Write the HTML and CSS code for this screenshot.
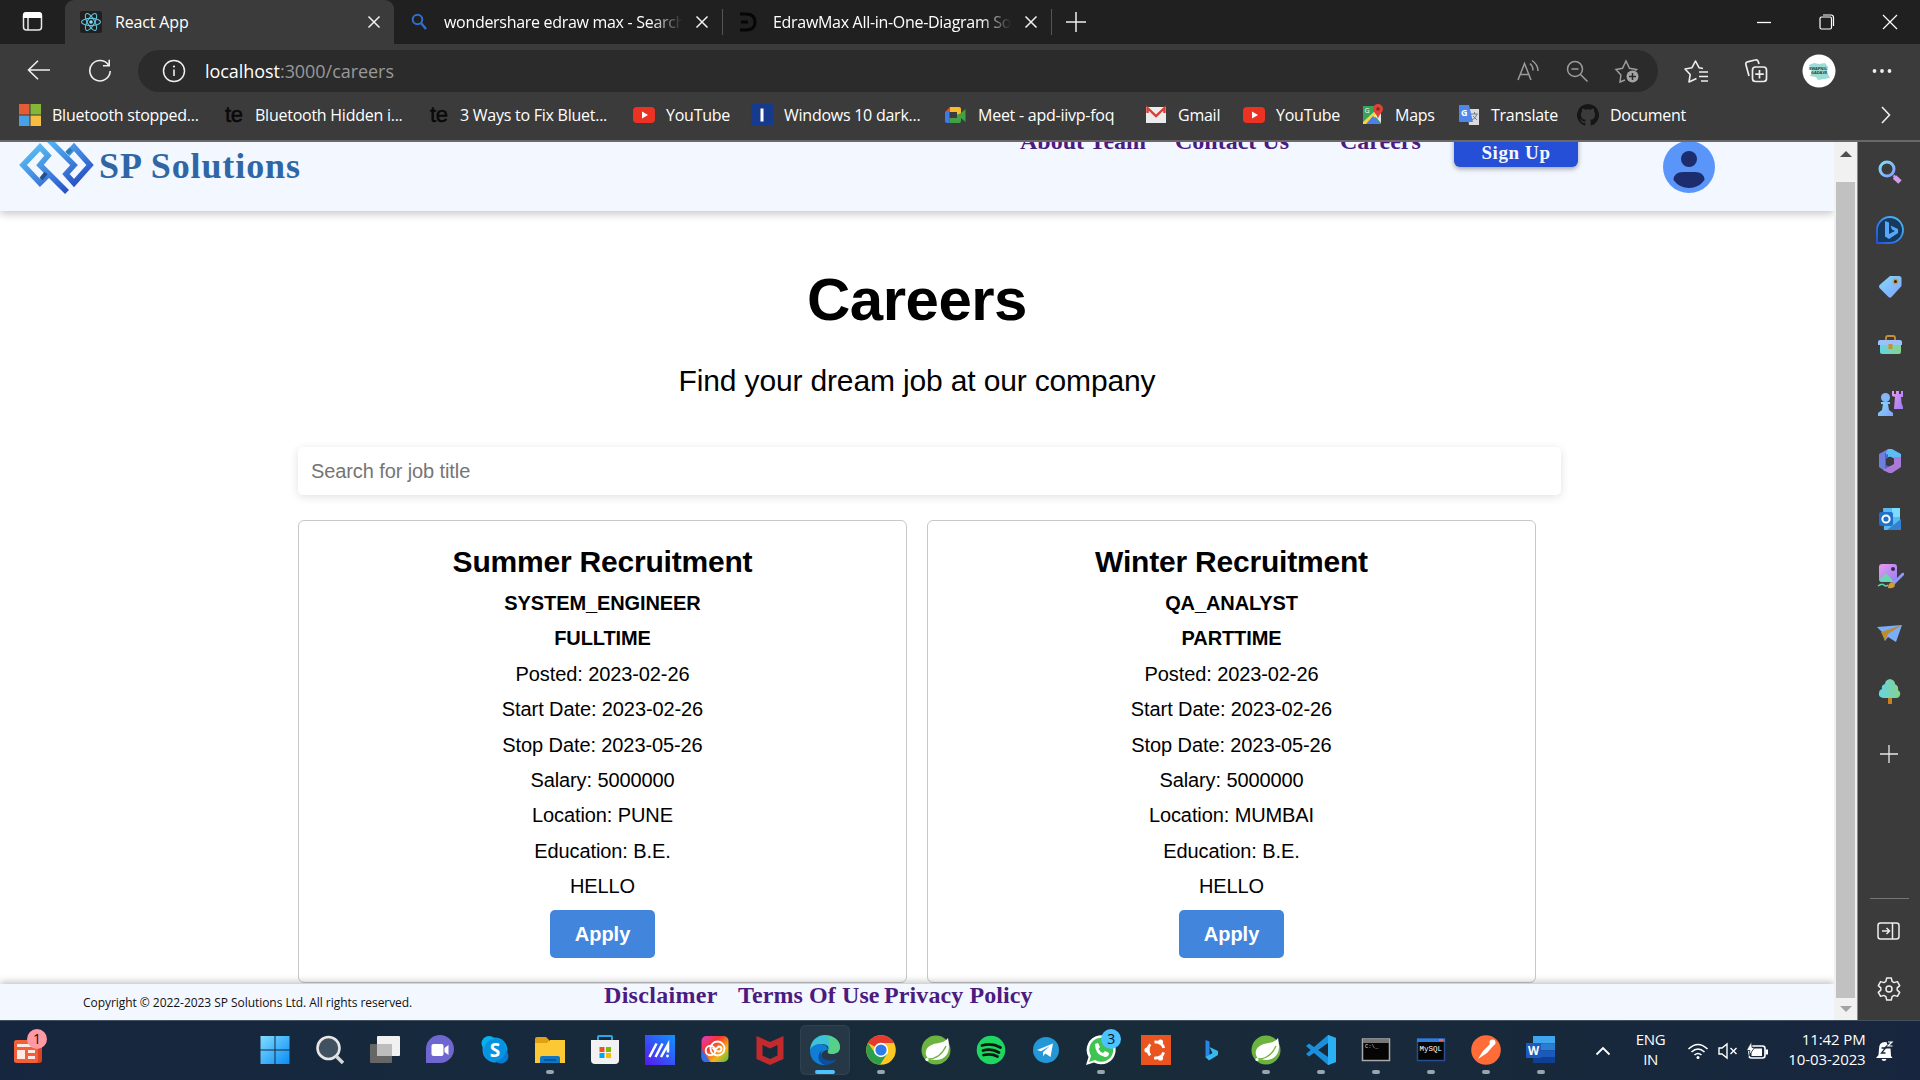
FILE: index.html
```html
<!DOCTYPE html>
<html lang="en">
<head>
<meta charset="utf-8">
<title>React App</title>
<link rel="stylesheet" href="styles.css">
</head>
<body>
<svg class="defs" width="0" height="0">
  <defs>
    <linearGradient id="blue" x1="0" y1="0" x2="1" y2="1"><stop offset="0" stop-color="#7fdcff"/><stop offset="1" stop-color="#0a8cf5"/></linearGradient>
    <linearGradient id="pale" x1="0" y1="0" x2="1" y2="1"><stop offset="0" stop-color="#7edcf8"/><stop offset="1" stop-color="#86a0ff"/></linearGradient>
    <linearGradient id="ring" x1="1" y1="0" x2="0" y2="1"><stop offset="0" stop-color="#4fc3f7"/><stop offset="1" stop-color="#2552e0"/></linearGradient>
    <linearGradient id="violet" x1="0" y1="0" x2="1" y2="1"><stop offset="0" stop-color="#e79af0"/><stop offset="1" stop-color="#9a7cf4"/></linearGradient>
    <linearGradient id="green" x1="0" y1="0" x2="1" y2="0"><stop offset="0" stop-color="#66d3e6"/><stop offset="1" stop-color="#86d38a"/></linearGradient>
    <linearGradient id="brand" gradientUnits="userSpaceOnUse" x1="30" y1="4" x2="62" y2="56"><stop offset="0" stop-color="#58bdf2"/><stop offset=".55" stop-color="#3f7fdc"/><stop offset="1" stop-color="#2447bd"/></linearGradient>
  </defs>
  <symbol id="close" viewBox="0 0 14 14"><path d="M1.500 1.500l11 11M12.500 1.500l-11 11" stroke="#f2f2f2" stroke-width="1.500" fill="none"/></symbol>
  <symbol id="youtube" viewBox="0 0 22 22"><rect y="3" width="22" height="16" rx="4" fill="#ec3323"/><path d="M9 7.500v7l6-3.500z" fill="#fff"/></symbol>
  <symbol id="spring" viewBox="0 0 30 30"><circle cx="15" cy="15" r="14.500" fill="#6db33f"/><path d="M27 3c1.500 8 2 15-4 19.500-5 3.500-11 2.500-15.500 1.500-5-5-3-12 4-14.500C17 7.500 23 8.500 27 3z" fill="#fff"/><path d="M7 24c7 0 14-4 18-13" stroke="#6db33f" stroke-width="1.300" fill="none"/><circle cx="6" cy="24.500" r="1.600" fill="#fff"/></symbol>
</svg>

<div class="tabs">
  <div class="tab-menu"><svg width="22" height="22" viewBox="0 0 22 22"><rect x="1.500" y="2" width="18" height="17" rx="3" fill="none" stroke="#e8e8e8" stroke-width="1.500"/><path d="M1 7V4q0-3 3-3h13q3 0 3 3v3z" fill="#fff"/><path d="M6 7v12" stroke="#e8e8e8" stroke-width="1.500"/></svg></div>
  <div class="tab tab-active">
    <svg width="22" height="22" viewBox="0 0 22 22"><rect width="22" height="22" rx="2" fill="#202020"/><g fill="none" stroke="#61c3de" stroke-width="1.100"><ellipse cx="11" cy="11" rx="9.500" ry="3.600"/><ellipse cx="11" cy="11" rx="9.500" ry="3.600" transform="rotate(60 11 11)"/><ellipse cx="11" cy="11" rx="9.500" ry="3.600" transform="rotate(120 11 11)"/></g><circle cx="11" cy="11" r="1.700" fill="#8be6ff"/></svg>
    <span class="tab-title">React App</span><svg class="tab-close"><use href="#close"/></svg>
  </div>
  <div class="tab tab-search">
    <svg width="20" height="20" viewBox="0 0 20 20"><circle cx="7.500" cy="7.500" r="4.800" fill="none" stroke="#2f6fd0" stroke-width="2"/><path d="M11 11l5 6" stroke="#2f6fd0" stroke-width="2.400"/></svg>
    <span class="tab-title fade">wondershare edraw max - Search</span><svg class="tab-close"><use href="#close"/></svg>
  </div>
  <div class="tab tab-edraw">
    <svg width="20" height="22" viewBox="0 0 20 22"><path d="M1 3h6c6 0 9 3 9 8s-3 8-9 8H1M2 11h7" fill="none" stroke="#060606" stroke-width="3"/></svg>
    <span class="tab-title fade">EdrawMax All-in-One-Diagram So</span><svg class="tab-close"><use href="#close"/></svg>
  </div>
  <svg class="tab-new" width="20" height="20" viewBox="0 0 20 20"><path d="M10 0v20M0 10h20" stroke="#eee" stroke-width="1.500"/></svg>
  <div class="window-buttons">
    <svg width="16" height="16" viewBox="0 0 16 16"><path d="M1 8.500h14" stroke="#fff" stroke-width="1.300"/></svg>
    <svg width="16" height="16" viewBox="0 0 16 16" fill="none" stroke="#fff" stroke-width="1.200"><rect x="1" y="3" width="11.500" height="12" rx="1.500"/><path d="M4 1h8q2.500 0 2.500 2.500V12"/></svg>
    <svg width="16" height="16" viewBox="0 0 16 16"><path d="M1 1l14 14M15 1L1 15" stroke="#fff" stroke-width="1.200"/></svg>
  </div>
</div>

<div class="toolbar">
  <svg class="back" width="24" height="20" viewBox="0 0 24 20" fill="none" stroke="#eee" stroke-width="1.600"><path d="M23 10H1.500M11 .8L1.500 10l9.500 9.200"/></svg>
  <svg class="reload" width="24" height="24" viewBox="0 0 24 24" fill="none" stroke="#eee" stroke-width="1.600"><path d="M20.800 6.500A10.200 10.200 0 1 0 22.200 12M15 6.800h6.200V.8"/></svg>
  <div class="omnibox">
    <svg width="24" height="24" viewBox="0 0 24 24"><circle cx="12" cy="12" r="10.500" fill="none" stroke="#eee" stroke-width="1.500"/><path d="M12 10.500v6.500" stroke="#eee" stroke-width="1.600"/><circle cx="12" cy="7.500" r="1.100" fill="#eee"/></svg>
    <span class="url">localhost<span class="url-rest">:3000/careers</span></span>
    <div class="omnibox-actions">
      <svg width="24" height="24" viewBox="0 0 24 24" fill="none" stroke="#9c9c9c" stroke-width="1.500"><path d="M2 21L8.500 4.500 15 21M4.500 15.500h8M14 4.500q3 2.500 3 7M16 1.500q6 4 6 10.500"/></svg>
      <svg width="24" height="24" viewBox="0 0 24 24" fill="none" stroke="#9c9c9c" stroke-width="1.500"><circle cx="10" cy="10" r="7.500"/><path d="M6.500 10h7M15.500 15.500l7 7"/></svg>
      <svg width="26" height="26" viewBox="0 0 26 26" fill="none" stroke="#9c9c9c" stroke-width="1.500"><path d="M11 22l-5 2 .9-7L2 11.500l6.500-1.200L12 3l3.500 7.300 7 1.200-1.500 1.500"/><circle cx="18.500" cy="18.500" r="6" fill="#a5a5a5" stroke="none"/><path d="M18.500 15v7M15 18.500h7" stroke="#2b2b2b"/></svg>
    </div>
  </div>
  <svg width="26" height="26" viewBox="0 0 26 26" fill="none" stroke="#eee" stroke-width="1.600" stroke-linejoin="round"><path d="M13.500 20.500L6 24l1.200-7.500L2 11l7-1.300L12.500 3l3.500 6.700 4 .8M16 14h9M16 18.500h9M18 23h7"/></svg>
  <svg width="26" height="26" viewBox="0 0 26 26" fill="none" stroke="#eee" stroke-width="1.700"><rect x="9.500" y="9" width="14" height="14.500" rx="3"/><path d="M16.500 12v8.500M12.300 16.200h8.500M6 18L3 7q-.8-2.500 1.500-3.200L12 2q2.500-.7 3.200 1.500L16 6"/></svg>
  <svg width="34" height="34" viewBox="0 0 34 34"><circle cx="17" cy="17" r="16.500" fill="#fff"/><path d="M7 11l5-2 5 1 6-1 3 4-1 5 3 6-6 1-6 1-2-3-6-1 2-4z" fill="#9bdcd5"/><text x="7" y="15.500" font-size="4" font-weight="700" fill="#1d3b3b">SWAPNIL</text><text x="9" y="20" font-size="4" font-weight="700" fill="#1d3b3b">GADAVE</text></svg>
  <svg width="20" height="6" viewBox="0 0 20 6" fill="#eee"><circle cx="2.500" cy="3" r="1.900"/><circle cx="10" cy="3" r="1.900"/><circle cx="17.500" cy="3" r="1.900"/></svg>
</div>

<div class="bookmarks">
  <div class="bookmark"><svg viewBox="0 0 22 22"><path fill="#e45c35" d="M0 0h10.500v10.500H0z"/><path fill="#86b637" d="M11.500 0H22v10.500H11.500z"/><path fill="#4aa0e8" d="M0 11.500h10.500V22H0z"/><path fill="#f5bd42" d="M11.500 11.500H22V22H11.500z"/></svg><span>Bluetooth stopped...</span></div>
  <div class="bookmark"><b class="te">te</b><span>Bluetooth Hidden i...</span></div>
  <div class="bookmark"><b class="te">te</b><span>3 Ways to Fix Bluet...</span></div>
  <div class="bookmark"><svg><use href="#youtube"/></svg><span>YouTube</span></div>
  <div class="bookmark"><svg viewBox="0 0 22 22"><path fill="#163a8c" d="M0 0h22v22H0z"/><path fill="#fff" d="M9.500 4.500h3v13h-3z"/></svg><span>Windows 10 dark...</span></div>
  <div class="bookmark"><svg viewBox="0 0 22 22"><path fill="#3f7ae8" d="M0 8h4.500v11H2q-2 0-2-2z"/><path fill="#e5463a" d="M0 8l5-5v5z"/><path fill="#f8bb2c" d="M5 3h9q2 0 2 2v5l-4 1V8H5z"/><path fill="#43a047" d="M4.500 14H12v-3l4-2 4.500-4v13L16 14v3q0 2-2 2H4.500z"/></svg><span>Meet - apd-iivp-foq</span></div>
  <div class="bookmark"><svg viewBox="0 0 22 22"><path fill="#ececec" d="M1 3h20v16H1z"/><path fill="none" stroke="#d93f35" stroke-width="2.400" d="M2.500 9V4l8.500 8 8.500-8v5"/></svg><span>Gmail</span></div>
  <div class="bookmark"><svg><use href="#youtube"/></svg><span>YouTube</span></div>
  <div class="bookmark"><svg viewBox="0 0 22 22"><path fill="#37a259" d="M1 2h18v18H1z"/><path fill="#f4d24b" d="M1 18L15 5l4 3L6 20H1z"/><path fill="#e8e8e8" d="M12 11l7 8V9z"/><path fill="#4a80ec" d="M4 20l7-8 8 8z"/><path fill="#dc4437" d="M16 0a5 5 0 0 1 5 5c0 3-4 5-5 10-1-5-5-7-5-10a5 5 0 0 1 5-5z"/><circle cx="16" cy="5" r="1.800" fill="#8f2420"/><text x="2.500" y="9" font-size="7" fill="#fff">G</text></svg><span>Maps</span></div>
  <div class="bookmark"><svg viewBox="0 0 22 22"><path fill="#dcdcdc" d="M9 5h12v16H11z"/><path fill="#4f86ec" d="M1 1h10l4 17H2q-1 0-1-1z"/><path d="M13 10h7M16.500 8v2M14 16q4-2 5-6M15 12l4 4" stroke="#6f7f90" fill="none"/><text x="3" y="12" font-size="9" font-weight="700" fill="#fff">G</text></svg><span>Translate</span></div>
  <div class="bookmark"><svg viewBox="0 0 16 16"><path fill="#161616" d="M8 0a8 8 0 0 0-2.530 15.590c.4.070.55-.17.55-.380 0-.19-.010-.820-.010-1.490-2.010.370-2.530-.490-2.690-.940-.090-.230-.480-.940-.820-1.130-.280-.150-.680-.520-.010-.530.630-.010 1.080.580 1.230.820.720 1.210 1.870.870 2.330.660.070-.520.280-.870.510-1.070-1.780-.2-3.640-.890-3.640-3.950 0-.870.310-1.590.820-2.150-.080-.2-.360-1.020.080-2.120 0 0 .670-.210 2.200.820a7.600 7.600 0 0 1 4 0c1.530-1.040 2.200-.820 2.200-.820.440 1.100.160 1.920.080 2.120.510.560.820 1.270.820 2.150 0 3.070-1.870 3.750-3.650 3.950.290.250.540.730.540 1.480 0 1.070-.010 1.930-.010 2.200 0 .210.150.460.550.380A8 8 0 0 0 8 0z"/></svg><span>Document</span></div>
  <svg class="more" width="12" height="18" viewBox="0 0 12 18"><path d="M2 1l7.500 8L2 17" stroke="#eee" stroke-width="1.600" fill="none"/></svg>
</div>

<div class="workspace">
  <div class="page">
    <header class="site-header">
      <svg class="logo" width="100" height="60" viewBox="0 4 100 60" fill="none" stroke="url(#brand)" stroke-width="5.600">
        <path d="M37 38L30 45 13 27 30 9l8 8.500L30 27 57 54"/>
        <path d="M39 2L64 27l-8 9 8 9 16-18L64 9l-6.500 7"/>
        <path d="M31 41l5-6" stroke="#24508f" stroke-width="4"/>
        <path d="M57 15l4-4" stroke="#2f7dab" stroke-width="4"/>
      </svg>
      <span class="brand">SP Solutions</span>
      <nav class="site-nav"><a class="nav-about">About Team</a><a class="nav-contact">Contact Us</a><a class="nav-careers">Careers</a></nav>
      <button class="sign-up">Sign Up</button>
      <svg class="account" width="52" height="52" viewBox="0 0 52 52"><circle cx="26" cy="26" r="26" fill="#5a96f9"/><circle cx="26" cy="18" r="8" fill="#1c2c6c"/><path d="M20 31h12q9 0 9.500 8-6 8-15.500 8t-15.500-8q.5-8 9.500-8z" fill="#1c2c6c"/></svg>
    </header>
    <main class="careers">
      <h1>Careers</h1>
      <p class="tagline">Find your dream job at our company</p>
      <div class="search">Search for job title</div>
      <div class="jobs">
        <article class="job">
          <h2>Summer Recruitment</h2>
          <p><b>SYSTEM_ENGINEER</b></p><p><b>FULLTIME</b></p>
          <p>Posted: 2023-02-26</p><p>Start Date: 2023-02-26</p><p>Stop Date: 2023-05-26</p>
          <p>Salary: 5000000</p><p>Location: PUNE</p><p>Education: B.E.</p><p>HELLO</p>
          <button class="apply">Apply</button>
        </article>
        <article class="job">
          <h2>Winter Recruitment</h2>
          <p><b>QA_ANALYST</b></p><p><b>PARTTIME</b></p>
          <p>Posted: 2023-02-26</p><p>Start Date: 2023-02-26</p><p>Stop Date: 2023-05-26</p>
          <p>Salary: 5000000</p><p>Location: MUMBAI</p><p>Education: B.E.</p><p>HELLO</p>
          <button class="apply">Apply</button>
        </article>
      </div>
    </main>
    <footer class="site-footer">
      <span class="copyright">Copyright © 2022-2023 SP Solutions Ltd. All rights reserved.</span>
      <a class="link-disclaimer">Disclaimer</a><a class="link-terms">Terms Of Use</a><a class="link-privacy">Privacy Policy</a>
    </footer>
  </div>
  <div class="scrollbar"><i class="arrow-up"></i><div class="thumb"></div><i class="arrow-down"></i></div>
  <aside class="sidebar">
    <div class="side-item"><svg viewBox="0 0 28 28"><circle cx="11" cy="11" r="7" fill="none" stroke="url(#pale)" stroke-width="3"/><path d="M17.500 17.500l2 2" stroke="#9aa0f0" stroke-width="2.500"/><path d="M18.500 19l5.500 5" stroke="#d79af0" stroke-width="5"/></svg></div>
    <div class="side-item"><svg viewBox="0 0 28 28"><path d="M1 27V14A13 13 0 1 1 14 27z" fill="#163a5e" stroke="url(#ring)" stroke-width="1.800"/><path d="M9 5l4 1.500V18l6-3-3-1.500-1.500-4L22 13v4l-9 6-4-2.500z" fill="#55a8fb"/></svg></div>
    <div class="side-item"><svg viewBox="0 0 28 28"><path d="M14 3h9q2.500 0 2.500 2.500V13L15.500 24q-1.500 1.500-3 0L3.500 15q-1-1.500 0-3z" fill="url(#pale)"/><circle cx="19.500" cy="8.500" r="2.200" fill="#222" stroke="#d79a2c" stroke-width="1.400"/></svg></div>
    <div class="side-item"><svg viewBox="0 -1 28 28"><path d="M10 9V6q0-2 2-2h5q2 0 2 2v3" fill="none" stroke="#c89031" stroke-width="1.800"/><path d="M4 13h21v7q0 2-2 2H6q-2 0-2-2z" fill="url(#green)"/><path d="M2 10q0-2 2-2h20q2 0 2 2v3H2z" fill="#9cc0fb"/><path d="M12.500 12h4v5h-4z" fill="#c89031"/></svg></div>
    <div class="side-item"><svg viewBox="0 0 28 28"><path d="M16 2h2v3h2V2h3v3h2V2h2v6h-2l.5 6 1.500 4v2h-9l1-12-3-1z" fill="url(#violet)"/><circle cx="9.500" cy="8.500" r="4.500" fill="#84b6fc"/><path d="M5 13h9v2h-2l1 6 4 3v3H2v-3l4-3 1-6H5z" fill="url(#pale)"/></svg></div>
    <div class="side-item"><svg viewBox="0 0 28 28"><path d="M12 2h4l9 5v9l-6-4-4-2h-5V4z" fill="#5cbdf5"/><path d="M12 2L3 7v13l6 4V8z" fill="#6f7fe0"/><path d="M9 8l3-1v4l-2 3v4l4 2-5 3z" fill="#4a63cf"/><path d="M25 10v10l-9 6h-3l-6-3 7-4 4-2V10z" fill="#a97ad8"/><path d="M14 9.500l4 2.500v4.500l-4 2.500-4-2.500V12z" fill="#3b3b3b"/></svg></div>
    <div class="side-item"><svg viewBox="0 0 28 28"><path d="M7 3h17v22H8z" fill="#58b9f3"/><path d="M16 3h8v9h-8z" fill="#7cdcff"/><path d="M11 25l14-11v11z" fill="#3282cf"/><rect x="3" y="7" width="14" height="14" rx="2" fill="#2071c8"/><circle cx="10" cy="14" r="3.600" fill="none" stroke="#fff" stroke-width="2"/></svg></div>
    <div class="side-item"><svg viewBox="0 0 28 28"><rect x="3" y="2" width="18" height="18" rx="3" fill="url(#violet)"/><path d="M3 18l7-7 8 9H5z" fill="#6cd6b4"/><circle cx="17" cy="7" r="2" fill="#313047"/><path d="M16 21L26 11q3-1 2 2L18 23z" fill="#8b9afb"/><path d="M12 26q0-5 4-6l3 3q-1 4-7 3z" fill="#d79a2c"/><path d="M2 24q4-3 6-1t4 0" fill="none" stroke="#66d3b0" stroke-width="1.500"/></svg></div>
    <div class="side-item"><svg viewBox="0 0 28 28"><path d="M1 7l25-2-6 17-8-5-3 4-2-8z" fill="#79aef8"/><path d="M5 12L26 5 12 14 9 21z" fill="#c08a2f"/></svg></div>
    <div class="side-item"><svg viewBox="0 0 28 28"><path d="M12 18h4v8h-4z" fill="#c87f20"/><path d="M14 1q5 1 5 5 4 2 3 6 4 3 1 7-1 1-3 1H7q-5-1-4-5 0-3 3-4-1-4 3-5 0-4 5-5z" fill="url(#green)"/></svg></div>
    <div class="side-add"><svg width="18" height="18" viewBox="0 0 18 18"><path d="M9 0v18M0 9h18" stroke="#e8e8e8" stroke-width="1.300"/></svg></div>
    <div class="side-bottom">
      <svg width="24" height="18" viewBox="0 0 24 18" fill="none" stroke="#eee" stroke-width="1.500"><rect x="1" y="1" width="21" height="16" rx="2.500"/><path d="M15.500 1v16M5 9h7M9.500 6l3 3-3 3"/></svg>
      <svg width="24" height="24" viewBox="0 0 24 24" fill="none" stroke="#eee" stroke-width="1.500"><circle cx="12" cy="12" r="3"/><path d="M9.700 1h4.600l.8 3.400 2 1.200 3.300-1 2.300 4-2.500 2.300v2.200l2.500 2.300-2.300 4-3.300-1-2 1.200-.8 3.400H9.700l-.8-3.400-2-1.200-3.300 1-2.300-4 2.500-2.300v-2.200L1.300 8.600l2.300-4 3.300 1 2-1.200z" stroke-linejoin="round"/></svg>
    </div>
  </aside>
</div>

<div class="taskbar">
  <div class="news"><svg width="30" height="24" viewBox="0 0 30 24"><rect y="0" width="28" height="23" rx="3" fill="#d9431f"/><rect width="24" height="23" rx="3" fill="#f2603a"/><path d="M3 4h18v3H3zM3 10h8v9H3zM14 10h7v3h-7zM14 16h7v3h-7z" fill="#fde9e2"/></svg><span class="badge badge-news">1</span></div>
  <div class="apps">
    <div class="app"><svg viewBox="0 0 30 30"><path fill="url(#blue)" d="M.5 1h14v13.500H.5zM15.500 1h14v13.500h-14zM.5 15.500h14V29H.5zM15.500 15.500h14V29h-14z"/></svg></div>
    <div class="app"><svg viewBox="0 0 30 30"><circle cx="13.500" cy="13" r="11" fill="#405160" stroke="#e6e6e6" stroke-width="2.600"/><path d="M21 21l7 7" stroke="#d8d8d8" stroke-width="3.600"/></svg></div>
    <div class="app"><svg viewBox="0 0 30 30"><rect y="9" width="22" height="19" rx="1" fill="#666"/><rect x="7" y="1" width="23" height="20" rx="1" fill="#f1f1f1"/><path d="M7 9h15v12H7z" fill="#bdbdbd"/></svg></div>
    <div class="app"><svg viewBox="0 0 30 30"><path d="M1 28V15A14 14 0 1 1 15 28z" fill="#6f67cf"/><rect x="6.500" y="9" width="12" height="12" rx="2" fill="#fff"/><path d="M19.500 13l4-3v10l-4-3z" fill="#fff"/></svg></div>
    <div class="app"><svg viewBox="0 0 30 30"><circle cx="15" cy="15" r="12.500" fill="#0b9be4"/><circle cx="9" cy="8.500" r="7.500" fill="#0ab0ee"/><circle cx="21" cy="21" r="7.500" fill="#0878d0"/><circle cx="15" cy="15" r="11" fill="#0793df"/><text x="15" y="21.500" text-anchor="middle" font-size="19" font-weight="700" fill="#fff">S</text></svg></div>
    <div class="app run"><svg viewBox="0 0 30 30"><path d="M0 4q0-2 2-2h9l3 3v5H0z" fill="#dfa013"/><path d="M0 8h12l3-3h15v23H0z" fill="#fcc935"/><path d="M5 28v-5q0-2 2-2h16q2 0 2 2v5z" fill="#0f76c6"/><path d="M9 25h12" stroke="#0a4c8c" stroke-width="1.500"/></svg></div>
    <div class="app"><svg viewBox="0 0 30 30"><path d="M8 6V2q0-1 1-1h12q1 0 1 1v4" fill="none" stroke="#2aa7e8" stroke-width="2"/><path d="M1 5h28v20q0 4-4 4H5q-4 0-4-4z" fill="#f2f2f2"/><path fill="#f25022" d="M9.500 12h5v5h-5z"/><path fill="#7fba00" d="M16 12h5v5h-5z"/><path fill="#00a4ef" d="M9.500 18h5v5h-5z"/><path fill="#ffb900" d="M16 18h5v5h-5z"/></svg></div>
    <div class="app"><svg viewBox="0 0 30 30"><defs><linearGradient id="asus" x1="0" y1="1" x2="1" y2="0"><stop stop-color="#5a16f0"/><stop offset="1" stop-color="#0c95ff"/></linearGradient></defs><path fill="url(#asus)" d="M0 0h30v30H0z"/><path d="M4.500 22L11.500 8.500M10.500 22l7-13.500M16 22l7-12.500v8" stroke="#fff" stroke-width="2.500" fill="none"/><circle cx="22.500" cy="21" r="1.400" fill="#fff"/></svg></div>
    <div class="app"><svg viewBox="0 0 30 30"><defs><linearGradient id="cc" x1="0" y1="0" x2="1" y2="1"><stop stop-color="#e23bd6"/><stop offset=".35" stop-color="#f2352c"/><stop offset=".7" stop-color="#f6b318"/><stop offset="1" stop-color="#3fc34b"/></linearGradient></defs><rect x="1.500" y="1" width="27" height="26" rx="5" fill="url(#cc)"/><path d="M1.500 14l9 13H6q-4.500 0-4.500-5z" fill="#386de8"/><g fill="none" stroke="#fff" stroke-width="1.900"><circle cx="17.500" cy="13.500" r="7"/><circle cx="10.500" cy="15.500" r="4.800"/><path d="M14 16l4.500-4.500q3 0 3 2.500t-3 2.500q-3 0-6-4"/></g></svg></div>
    <div class="app"><svg viewBox="0 0 30 30"><path d="M1.500 1l13.500 6 13.500-6v23L15 30 1.500 24zM7.500 10v10.500L15 24l7.500-3.500V10L15 13.500z" fill="#c22a2e" fill-rule="evenodd"/></svg></div>
    <div class="app active"><svg viewBox="0 0 30 30"><path d="M0 16C0 6 7 0 15 0c9 0 15 6 15 12 0 5-4 7-8 7-3 0-5-1-4-3 2-5-2-7-6-7C6 9 1 12 0 16z" fill="#3cc4d6"/><path d="M18 1c8 1 12 6 12 11 0 5-4 7-8 7-3 0-5-1-4-3 3-5 1-8 0-15z" fill="#61d66e" opacity=".75"/><path d="M0 16C1 11 6 9 11 9c5 0 7 4 7 6-8 0-9 9-1 15C6 31 0 24 0 16z" fill="#117ed6"/><path d="M12 15c-3 6 3 14 15 9-3 4-7 6-12 6C8 28 6 20 12 15z" fill="#0d4e9d"/></svg></div>
    <div class="app run"><svg viewBox="0 0 30 30"><circle cx="15" cy="15" r="14.800" fill="#fdc821"/><path d="M15 15L2 8A14.800 14.800 0 0 1 28 8H15z" fill="#e33b2e"/><path d="M2 8A14.800 14.800 0 0 0 14 29.800L21 19 15 15 9 18z" fill="#2c9f4b"/><circle cx="15" cy="15" r="7.200" fill="#fff"/><circle cx="15" cy="15" r="5.600" fill="#2f7bea"/></svg></div>
    <div class="app"><svg><use href="#spring"/></svg></div>
    <div class="app"><svg viewBox="0 0 30 30"><circle cx="15" cy="15" r="14.300" fill="#1ed760"/><path d="M6 10.500q10-3 18.500 2M7 15.500q8.500-2.500 16 2M7.500 20q8-2 14 1.500" fill="none" stroke="#0c1a13" stroke-width="2.700" stroke-linecap="round"/></svg></div>
    <div class="app"><svg viewBox="0 0 30 30"><circle cx="15" cy="15" r="13" fill="#2497d6"/><path d="M6 15L22 8.500 19.500 22l-5-3.500-2.500 2.500v-4l7-6-9 5.300z" fill="#fff"/></svg></div>
    <div class="app run"><svg viewBox="0 0 30 30"><path d="M0 30l2.500-8A14.500 14.500 0 1 1 8 27.500z" fill="#fff"/><path d="M3 27l2-6A12 12 0 1 1 9 25z" fill="#3fc351"/><path d="M9 9l3-1 2 4-1.500 2q1.500 3 4.500 4l2-2 4 2q0 4-4 4Q9 20 9 9z" fill="#fff"/></svg><span class="badge badge-chat">3</span></div>
    <div class="app"><svg viewBox="0 0 30 30"><path fill="#e95420" d="M0 0h30v30H0z"/><circle cx="15" cy="15" r="8" fill="none" stroke="#fff" stroke-width="2.800" stroke-dasharray="12 4.755" stroke-dashoffset="-2.400"/><g fill="#fff"><circle cx="6" cy="15" r="2.600"/><circle cx="19.500" cy="7" r="2.600"/><circle cx="19.500" cy="23" r="2.600"/></g></svg></div>
    <div class="app"><svg viewBox="0 0 30 30"><path d="M9.500 5l4 1.500V20l-4 3z" fill="#2785e6"/><path d="M9.500 22l7-4-3-6 8.500 4v4l-9 5.500z" fill="#35b8ea"/></svg></div>
    <div class="app run"><svg><use href="#spring"/></svg></div>
    <div class="app run"><svg viewBox="0 0 30 30"><path d="M22 0l8 3v24l-8 3L0 11l3-2.500L22 22V8L3 21.500 0 19z" fill="#1c8fdc"/><path d="M22 0l8 3v24l-8 3z" fill="#2bb0f5"/></svg></div>
    <div class="app run"><svg viewBox="0 0 30 30"><rect x="1.500" y="4" width="27" height="21.500" fill="#050505" stroke="#a9a9a9" stroke-width="1.500"/><path d="M2 4.500h26V8H2z" fill="#777"/><text class="mono" x="4" y="12.500" font-size="5.500" fill="#ddd">C:\_</text></svg></div>
    <div class="app run"><svg viewBox="0 0 30 30"><rect x="1.500" y="4" width="27" height="21.500" fill="#050505" stroke="#264e91" stroke-width="1.500"/><path d="M1 3.500h28V7H1z" fill="#2f7be0"/><path d="M23 4h4v2h-4z" fill="#e86c4f"/><text class="mono" x="3.500" y="15.500" font-size="7.500" fill="#fff">MySQL</text></svg></div>
    <div class="app run"><svg viewBox="0 0 30 30"><circle cx="15" cy="15" r="14.800" fill="#ff6c37"/><path d="M7 24l5-8 8-8 3 2-7 8z" fill="#fff"/><circle cx="21.500" cy="7.500" r="3" fill="#fff"/></svg></div>
    <div class="app run"><svg viewBox="0 0 30 30"><path fill="#41a5ee" d="M7 1h22v7.500H7z"/><path fill="#2b7cd3" d="M7 8.500h22v7H7z"/><path fill="#185abd" d="M7 15.500h22v7H7z"/><path fill="#103f91" d="M7 22h22v6H7z"/><path fill="#1b5bbe" d="M0 8h15v15H0z"/><text x="7.500" y="19.500" text-anchor="middle" font-size="11.500" font-weight="700" fill="#fff">W</text></svg></div>
  </div>
  <div class="tray">
    <svg width="16" height="10" viewBox="0 0 16 10"><path d="M1.500 8.500L8 2l6.500 6.500" fill="none" stroke="#fff" stroke-width="1.800"/></svg>
    <div class="tray-text lang"><span>ENG</span><span>IN</span></div>
    <svg width="22" height="18" viewBox="0 0 22 18" fill="none" stroke="#fff" stroke-width="1.600"><path d="M1.500 7q9.500-9 19 0M4.500 10q6.500-6 13 0M7.500 13q3.500-3 7 0"/><circle cx="11" cy="15.500" r="1.500" fill="#fff" stroke="none"/></svg>
    <svg width="22" height="18" viewBox="0 0 22 18" fill="none" stroke="#fff" stroke-width="1.400"><path d="M2 6v6h3l5 4V2L5 6zM13.500 6l6 6M19.500 6l-6 6"/></svg>
    <svg width="22" height="18" viewBox="0 0 22 18"><rect x="2" y="4" width="16" height="12" rx="2.500" fill="none" stroke="#fff" stroke-width="1.600"/><path d="M4.500 6.500h10.500v7.500h-10.500zM18.500 7.500h2.500v5h-2.500z" fill="#fff"/><path d="M4.500-.5L-.5 8.500h3.500l-1.500 6 6-9H5z" fill="#fff" stroke="#17293c" stroke-width=".8"/></svg>
    <div class="tray-text clock"><span>11:42 PM</span><span>10-03-2023</span></div>
    <svg width="18" height="22" viewBox="0 0 18 22"><path d="M3 9q0-7 6-7 5 0 5.500 6l.5 8 1.500 2H0l2.500-3z" fill="#fff"/><path d="M5.500 19h5q-.5 2-2.500 2t-2.500-2z" fill="#fff"/><path d="M5.500 8h4l-4 5h4" fill="none" stroke="#17293c" stroke-width="1.300"/><path d="M11 2.500h4.500L11 7h5" fill="none" stroke="#17293c" stroke-width="3"/><path d="M12 2h4l-4 4h4.500" fill="none" stroke="#fff" stroke-width="1.200"/></svg>
  </div>
</div>
</body>
</html>
```
FILE: styles.css
```css
* { box-sizing: border-box; }
body {
  margin: 0;
  width: 1920px;
  height: 1080px;
  overflow: hidden;
  display: flex;
  flex-direction: column;
  background: #3b3b3b;
  color: #fff;
  font-family: "Open Sans", "Noto Sans", sans-serif;
  font-size: 16px;
}
svg { display: block; flex: none; }
.defs { position: absolute; }

/* Tab strip */
.tabs {
  height: 44px;
  flex: none;
  display: flex;
  align-items: center;
  background: #202020;
}
.tab-menu { width: 65px; padding-left: 22px; }
.tab { display: flex; align-items: center; height: 44px; }
.tab-active { width: 329px; padding-left: 15px; background: #3b3b3b; border-radius: 9px 9px 0 0; }
.tab-search, .tab-edraw {
  width: 329px;
  padding-left: 16px;
  background: linear-gradient(#555, #555) right 9px / 1px 26px no-repeat;
}
.tab-search svg:first-child, .tab-edraw svg:first-child { margin-right: 4px; }
.tab-title {
  width: 241px;
  margin-left: 10px;
  overflow: hidden;
  white-space: nowrap;
  letter-spacing: -0.3px;
}
.tab-active .tab-title { margin-left: 13px; width: 244px; letter-spacing: -0.15px; }
.fade { -webkit-mask-image: linear-gradient(90deg, #000 86%, transparent 99%); mask-image: linear-gradient(90deg, #000 86%, transparent 99%); }
.tab-close { width: 14px; height: 14px; margin-left: 8px; }
.tab-search .tab-close, .tab-edraw .tab-close { margin-left: 10px; }
.tab-new { margin-left: 14px; }
.window-buttons { margin-left: auto; display: flex; gap: 47px; padding-right: 22px; }

/* Address bar */
.toolbar { height: 54px; flex: none; display: flex; align-items: center; padding-left: 26.500px; }
.back { margin-top: -2px; }
.reload { margin: 0 26.500px 0 37px; }
.omnibox {
  width: 1520px;
  height: 42px;
  margin-right: 25px;
  padding: 0 18px 0 24px;
  display: flex;
  align-items: center;
  background: #2b2b2b;
  border-radius: 21px;
}
.url { margin-left: 19px; font-size: 18px; letter-spacing: -0.05px; }
.url-rest { color: #999; }
.omnibox-actions { margin-left: auto; display: flex; align-items: center; gap: 25px; }
.toolbar > .omnibox + svg { margin-right: 34px; }
.toolbar > .omnibox + svg + svg { margin-right: 33px; }
.toolbar > .omnibox + svg + svg + svg { margin-right: 36px; }

/* Bookmarks */
.bookmarks {
  height: 44px;
  flex: none;
  padding: 1px 0 10px 19px;
  display: grid;
  align-items: center;
  grid-template-columns: 206px 205px 203px 118px 194px 200px 98px 119px 96px 119px 303px auto;
  border-bottom: 2px solid #6b6868;
  letter-spacing: -0.25px;
}
.bookmark { display: flex; align-items: center; gap: 11px; white-space: nowrap; }
.bookmark svg { width: 22px; height: 22px; }
.te { width: 19px; font: 22px/22px "Liberation Sans", sans-serif; color: #090909; -webkit-text-stroke: 0.5px #090909; }

/* Browser content area */
.workspace { height: 878px; flex: none; display: flex; }
.page {
  width: 1834px;
  display: flex;
  flex-direction: column;
  overflow: hidden;
  background: #fff;
  color: #000;
  font-family: "Liberation Sans", Arial, sans-serif;
}
.site-header {
  height: 69px;
  flex: none;
  display: flex;
  align-items: flex-start;
  padding-left: 10px;
  background: #f3f7ff;
  box-shadow: 0 3px 8px rgba(0, 0, 0, 0.22);
  font-family: "Liberation Serif", "Times New Roman", serif;
  font-weight: 700;
}
.logo { margin-right: -11px; }
.brand { width: 921px; margin-top: 2px; color: #2f67a6; font-size: 36px; line-height: 44px; letter-spacing: 0.9px; white-space: nowrap; }
.site-nav { display: flex; width: 434px; margin-top: -14px; font-size: 24px; line-height: 26px; color: #4b1b80; white-space: nowrap; }
.nav-about { width: 155px; }
.nav-contact { width: 165px; }
.sign-up {
  width: 124px;
  height: 45px;
  margin-top: -20px;
  padding: 15px 0 0;
  border: 0;
  border-radius: 6px;
  background: #264fd8;
  box-shadow: 0 2px 5px rgba(0, 0, 0, 0.35);
  color: #f3f7ff;
  font: bold 19px/32px "Liberation Serif", serif;
  letter-spacing: 0.6px;
}
.account { margin: -1px 0 0 85px; }

.careers { height: 773px; flex: none; padding: 55px 0 0 298px; }
.careers h1 { width: 1238px; margin: 0; font-size: 60px; line-height: 68px; letter-spacing: -0.5px; text-align: center; }
.tagline { width: 1238px; margin: 29px 0 48px; font-size: 30px; line-height: 36px; letter-spacing: -0.15px; text-align: center; }
.search {
  width: 1263px;
  height: 48px;
  margin-bottom: 25px;
  padding-left: 13px;
  border-radius: 5px;
  box-shadow: 0 2px 10px rgba(0, 0, 0, 0.12);
  color: #757575;
  font-size: 20px;
  line-height: 48px;
  letter-spacing: -0.1px;
}
.jobs { display: flex; gap: 20px; }
.job {
  width: 609px;
  height: 463px;
  padding-top: 23px;
  border: 1px solid #c8c8c8;
  border-radius: 6px;
  text-align: center;
  font-size: 20px;
  line-height: 35.4px;
  letter-spacing: -0.1px;
}
.job h2 { margin: 0 0 6px; font-size: 30px; line-height: 36px; letter-spacing: -0.2px; }
.job p { margin: 0; }
.apply {
  width: 105px;
  height: 48px;
  margin-top: 5px;
  padding-top: 2px;
  border: 0;
  border-radius: 5px;
  background: #4285dd;
  color: #fff;
  font: bold 20px "Liberation Sans", Arial, sans-serif;
  vertical-align: top;
}
.site-footer {
  height: 36px;
  flex: none;
  display: flex;
  padding-left: 83px;
  background: #f3f7ff;
  box-shadow: 0 -2px 7px rgba(0, 0, 0, 0.25);
  color: #4b1b80;
  font: bold 24px/26px "Liberation Serif", serif;
  letter-spacing: 0.1px;
  white-space: nowrap;
}
.site-footer a { margin-top: -2px; }
.copyright { width: 521px; margin-top: 7px; color: #111; font: 12px/24px "Open Sans", sans-serif; letter-spacing: -0.05px; }
.link-disclaimer { width: 134px; letter-spacing: 0.3px; }
.link-terms { width: 146px; }

/* Scrollbar */
.scrollbar { width: 24px; padding: 0 2px; display: flex; flex-direction: column; align-items: center; background: #f1f1f1; border-right: 1px solid #8a8a8a; }
.thumb { width: 19px; height: 816px; background: #c1c1c1; }
.arrow-up, .arrow-down { border: 6px solid transparent; }
.arrow-up { border-bottom-color: #505050; border-top: 0; margin: 9px 0 25px; }
.arrow-down { border-top-color: #a3a3a3; border-bottom: 0; margin-top: 8px; }

/* Edge sidebar */
.sidebar { width: 62px; display: flex; flex-direction: column; align-items: center; background: #3b3b3b; padding: 1px 0 0 2px; }
.side-item { height: 57.8px; flex: none; display: flex; align-items: center; }
.side-item svg { width: 28px; height: 28px; }
.side-add { margin: 24px 2px 0 0; }
.side-bottom { width: 39px; height: 122px; margin: auto 2px 0 0; padding-top: 23px; display: flex; flex-direction: column; align-items: center; gap: 37px; border-top: 1px solid #757575; }

/* Taskbar */
.taskbar {
  height: 60px;
  flex: none;
  display: flex;
  background: linear-gradient(90deg, #16263e, #172a3c 30%, #182b39 60%, #17263e);
  border-top: 1px solid #42505f;
}
.news { width: 247.500px; padding: 19px 0 0 14px; position: relative; }
.apps { display: flex; }
.app { width: 55.05px; height: 59px; display: flex; justify-content: center; align-items: center; position: relative; }
.app svg { width: 30px; height: 30px; margin-top: -1px; }
.run::after { content: ""; position: absolute; bottom: 6px; width: 8px; height: 4px; border-radius: 2px; background: #9aa4ab; }
.active { width: 50px; height: 50px; margin: 4px 2.52px 0; border-radius: 6px; background: #263746; box-shadow: inset 0 0 0 1px #304150; }
.active svg { margin-top: 0; }
.active::after { content: ""; position: absolute; bottom: 1px; width: 20px; height: 4px; border-radius: 2px; background: #4cc2ff; }
.badge { position: absolute; width: 20px; height: 20px; border-radius: 50%; color: #111; font-size: 14px; line-height: 20px; text-align: center; }
.badge-news { left: 27px; top: 8px; background: #ff99a4; }
.badge-chat { left: 28px; top: 8px; background: #4cc2ff; }
.mono { font-family: "Liberation Mono", monospace; }
.tray { display: flex; align-items: center; padding-left: 26px; }
.tray-text { display: flex; flex-direction: column; margin-top: -2px; font-size: 15px; line-height: 20px; letter-spacing: -0.3px; white-space: nowrap; }
.lang { width: 40px; margin: -3px 16px 0 20px; align-items: center; }
.tray > svg + svg { margin-left: 8px; }
.clock { width: 80px; margin: -4px 10px 0 17px; align-items: flex-end; letter-spacing: -0.1px; }
```
